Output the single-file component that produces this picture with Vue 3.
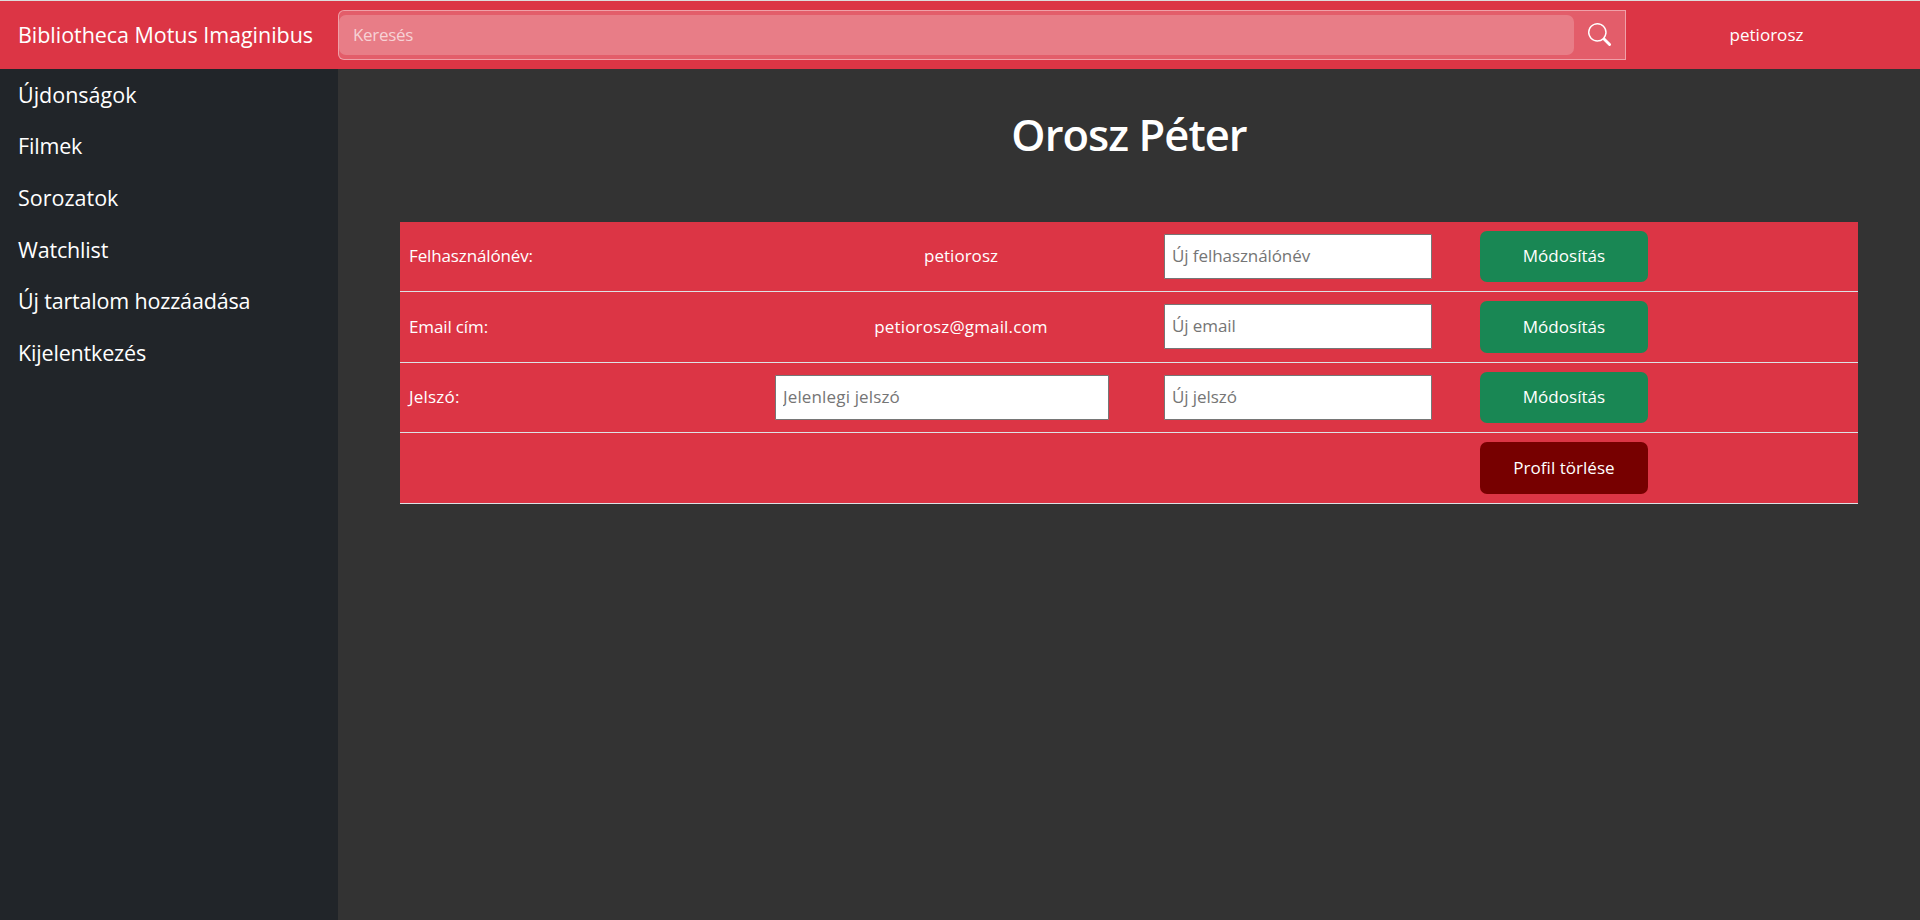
<script setup>
const links = [
  { text: 'Újdonságok', cls: 'wide' },
  { text: 'Filmek', cls: 'snug' },
  { text: 'Sorozatok', cls: 'wide' },
  { text: 'Watchlist', cls: 'snug' },
  { text: 'Új tartalom hozzáadása', cls: 'snug' },
  { text: 'Kijelentkezés', cls: 'snug' }
]
const rows = [
  { label: 'Felhasználónév:', value: 'petiorosz', next: 'Új felhasználónév', cls: 'name' },
  { label: 'Email cím:', value: 'petiorosz@gmail.com', next: 'Új email', cls: 'mail' },
  { label: 'Jelszó:', current: 'Jelenlegi jelszó', next: 'Új jelszó', cls: 'pass' }
]
</script>

<template>
  <div class="page">
    <header class="top">
      <div class="brand">Bibliotheca Motus Imaginibus</div>
      <form class="search" @submit.prevent>
        <input class="query" placeholder="Keresés" />
        <button class="find" aria-label="Keresés">
          <svg width="23" height="23" viewBox="0 0 16 16" fill="currentColor">
            <path d="M11.742 10.344a6.5 6.5 0 1 0-1.397 1.398h-.001c.03.04.062.078.098.115l3.85 3.85a1 1 0 0 0 1.415-1.414l-3.85-3.85a1.007 1.007 0 0 0-.115-.1zM12 6.5a5.5 5.5 0 1 1-11 0 5.5 5.5 0 0 1 11 0z" />
          </svg>
        </button>
      </form>
      <div class="user">petiorosz</div>
    </header>
    <div class="body">
      <nav class="side">
        <a v-for="l in links" :key="l.text" :class="l.cls">{{ l.text }}</a>
      </nav>
      <main class="main">
        <h1>Orosz Péter</h1>
        <section class="table">
          <div v-for="r in rows" :key="r.label" class="row" :class="r.cls">
            <div class="label">{{ r.label }}</div>
            <div class="value">
              <input v-if="r.current" class="field" :placeholder="r.current" />
              <span v-else>{{ r.value }}</span>
            </div>
            <div class="edit"><input class="field" :placeholder="r.next" /></div>
            <div class="action"><button class="btn">Módosítás</button></div>
          </div>
          <div class="row">
            <div></div><div></div><div></div>
            <div class="action"><button class="btn remove">Profil törlése</button></div>
          </div>
        </section>
      </main>
    </div>
  </div>
</template>

<style>
html, body { margin: 0; background: #333; overflow: hidden; }
</style>
<style scoped>
* { box-sizing: border-box; }
.page { height: 920px; display: flex; flex-direction: column; color: #fff; font: 17px/27px "Open Sans", "Noto Sans", sans-serif; letter-spacing: 0.03px; }
input, button { font: inherit; letter-spacing: inherit; color: inherit; margin: 0; outline: none; }
.top { height: 69px; flex: none; display: flex; align-items: center; background: #dc3545; border-top: 1px solid #ddd; }
.brand { width: 338px; padding: 0 0 2px 18px; font-size: 21.5px; letter-spacing: -0.04px; white-space: nowrap; }
.search { width: 1288px; height: 50px; margin-bottom: 1px; display: flex; align-items: center; border: 1px solid rgba(255,255,255,.42); border-radius: 6px 0 0 6px; background: rgba(255,255,255,.2); }
.query { width: 1235px; height: 40px; border: 0; border-radius: 7px; padding: 0 14px 1px; background: rgba(255,255,255,.2); letter-spacing: -0.3px; }
.query::placeholder { color: rgba(255,255,255,.66); }
.find { flex: 1; height: 40px; padding: 0; border: 0; background: none; display: flex; align-items: center; justify-content: center; color: #fff; }
.user { flex: 1; text-align: center; padding: 0 13px 2px 0; }
.body { flex: 1; display: flex; min-height: 0; }
.side { width: 338px; background: #212529; display: flex; flex-direction: column; }
.side a { height: 51.7px; padding: 8.5px 0 0 18px; font-size: 21.5px; line-height: 34px; }
.wide { letter-spacing: 0; }
.snug { letter-spacing: -0.17px; }
.main { flex: 1; background: #333; padding: 39px 62px 0; }
h1 { margin: 0 0 60px; height: 54px; font-size: 43.5px; line-height: 54px; font-weight: 600; text-align: center; letter-spacing: -0.95px; }
.table { width: 1458px; }
.row { height: 70px; display: grid; grid-template-columns: 366px 390px 315px 1fr; background: #dc3545; border-bottom: 1px solid #dee2e6; align-items: center; }
.row:nth-child(even) { height: 71px; }
.label { padding: 0 0 2px 9px; letter-spacing: -0.13px; }
.pass .label { letter-spacing: 0.2px; }
.value { padding: 0 9px 2px; display: flex; justify-content: center; }
.mail .value { letter-spacing: 0.15px; }
.pass .value { justify-content: flex-start; padding-bottom: 0; letter-spacing: 0.15px; }
.value .field { width: 334px; }
.edit { padding-left: 8px; display: flex; letter-spacing: -0.08px; }
.edit .field { width: 268px; }
.field { height: 45px; border: 1px solid #767676; border-radius: 1px; background: #fff; padding: 0 7px 2px; }
.mail .field { margin-bottom: 1px; }
.field::placeholder { color: #757575; }
.action { padding-left: 9px; display: flex; }
.btn { width: 168px; height: 51px; border: 0; border-radius: 7px; background: #198754; color: #fff; padding: 0 0 2px; }
.row:nth-child(even) .btn { height: 52px; }
.remove { background: #700; }
</style>
